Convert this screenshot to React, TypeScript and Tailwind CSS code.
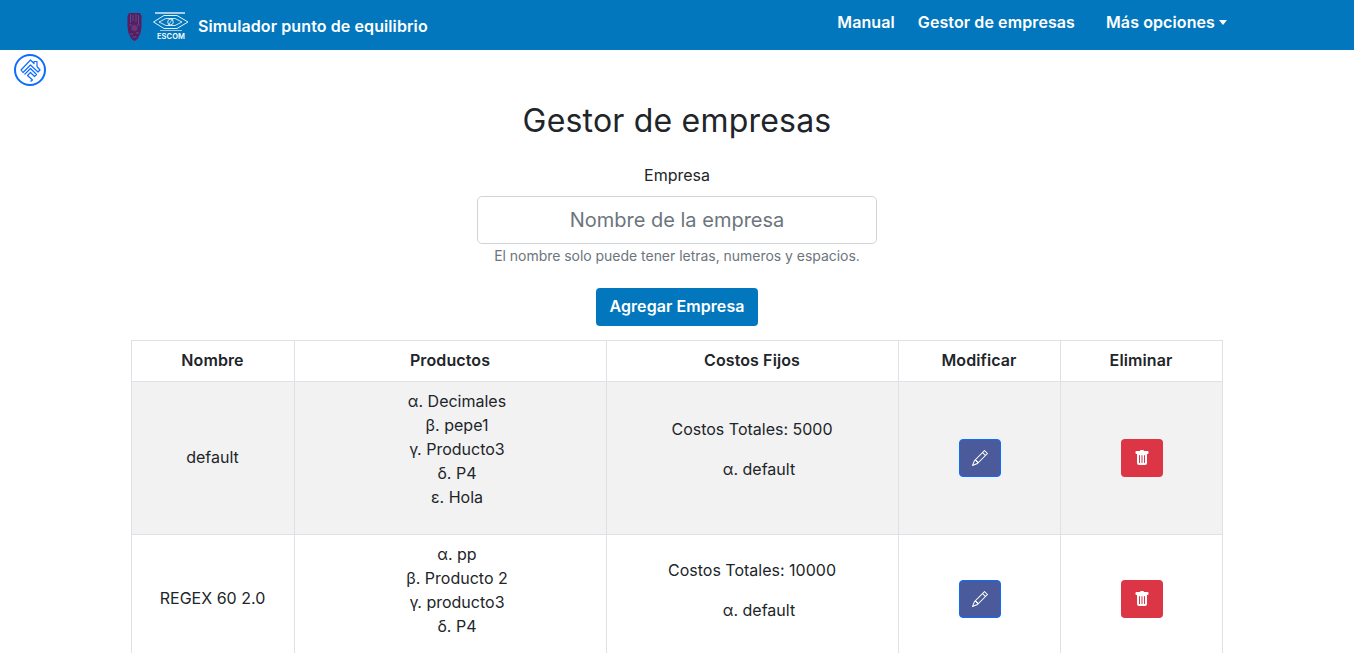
import { BsPencil, BsTrashFill } from "react-icons/bs";

const companies = [
  {
    name: "default",
    products: ["α. Decimales", "β. pepe1", "γ. Producto3", "δ. P4", "ε. Hola"],
    total: 5000,
    costs: ["α. default"],
  },
  {
    name: "REGEX 60 2.0",
    products: ["α. pp", "β. Producto 2", "γ. producto3", "δ. P4"],
    total: 10000,
    costs: ["α. default"],
  },
];

function IpnLogo() {
  return (
    <svg width="15" height="29" viewBox="0 0 15 29" className="mr-[11px] shrink-0">
      <path d="M2 1h11l1.500 3v11l-1 6-3 6-3 2-3-2-3-6-1-6V4z" fill="#5d1a5e" />
      <path d="M3.500 2v9M6 3v6M9 2v8M11.500 3v9M2 13h3M10 13h3" stroke="#3f6fa8" strokeWidth="0.7" />
      <circle cx="7.500" cy="16" r="2.800" fill="#8a2a62" stroke="#2a4c9c" strokeWidth="0.9" />
      <path d="M3 22h3M9 21h3M5.500 25h4" stroke="#3f6fa8" strokeWidth="0.8" />
    </svg>
  );
}

function EscomLogo() {
  return (
    <svg width="36" height="28" viewBox="0 0 36 28" fill="none" stroke="#fff" className="mr-[9px] shrink-0">
      <path d="M2 1h30" strokeWidth="1.300" />
      <path d="M0.500 10L11 3.500h13L35 10l-11 6.500H11z" strokeWidth="0.900" />
      <path d="M6 10l7-3.500h9l7 3.500-7 3.500h-9z" strokeWidth="0.800" />
      <circle cx="17.500" cy="10" r="2.800" strokeWidth="0.800" />
      <path d="M15 13l5-6" strokeWidth="0.700" />
      <path d="M7 18.500h22" strokeWidth="0.600" />
      <text x="18" y="26.500" textAnchor="middle" fontSize="7.500" fontWeight="600" fill="#fff" stroke="none" fontFamily="Inter, sans-serif">
        ESCOM
      </text>
    </svg>
  );
}

function BackBadge() {
  return (
    <svg width="32" height="32" viewBox="0 0 32 32" fill="none" stroke="#0d6efd" className="absolute left-[14px] top-[54px]">
      <circle cx="16" cy="16" r="15" strokeWidth="2" />
      <path d="M7 16L16.500 6l3.500 3.500v-2h3v5l3 3.500-2 2-7.500-7-7.500 7.500z" strokeWidth="1.200" strokeLinejoin="round" />
      <path d="M10.500 20.500l6-6 6 6-2 2-4-4-3 3 5 4.500-2 1.500" strokeWidth="1.200" strokeLinejoin="round" />
    </svg>
  );
}

export default function App() {
  return (
    <div className="relative h-screen overflow-hidden bg-white font-['Inter',sans-serif] text-[16px] leading-6 text-[#212529]">
      <nav className="flex h-[50px] items-center justify-between bg-[#0277bd] pl-[127px] pr-[127px] tracking-[0.1px] text-white">
        <div className="flex items-center pt-[2px]">
          <IpnLogo />
          <EscomLogo />
          <span className="font-semibold">Simulador punto de equilibrio</span>
        </div>
        <div className="-mt-[6px] flex items-center font-semibold">
          <span>Manual</span>
          <span className="ml-[23px]">Gestor de empresas</span>
          <span className="ml-[31px]">Más opciones</span>
          <span className="ml-[4px] mt-[1px] border-x-[4px] border-t-[5px] border-x-transparent border-t-white" />
        </div>
      </nav>

      <BackBadge />

      <main className="flex flex-col items-center">
        <h1 className="mt-[52px] text-[32px] font-normal leading-[38px] tracking-[0.2px]">Gestor de empresas</h1>
        <label className="mt-[23px]">Empresa</label>
        <input
          placeholder="Nombre de la empresa"
          className="mt-[9px] h-[48px] w-[400px] rounded-[5px] border border-[#ced4da] px-4 text-center text-[20px] outline-none placeholder:text-[#6c757d]"
        />
        <small className="mt-[1px] text-[14px] leading-[21px] tracking-[-0.03px] text-[#6c757d]">
          El nombre solo puede tener letras, numeros y espacios.
        </small>
        <button className="mt-[22px] h-[38px] w-[162px] rounded-[4px] bg-[#0277bd] pb-[2px] font-semibold tracking-[0.07px] text-white">
          Agregar Empresa
        </button>

        <table className="mb-auto mr-[1px] mt-[14px] w-[1091px] table-fixed border-collapse text-center">
          <colgroup>
            <col className="w-[163px]" />
            <col className="w-[312px]" />
            <col className="w-[292px]" />
            <col className="w-[162px]" />
            <col className="w-[162px]" />
          </colgroup>
          <thead>
            <tr className="h-[41px]">
              {["Nombre", "Productos", "Costos Fijos", "Modificar", "Eliminar"].map((h) => (
                <th key={h} className="border border-[#dee2e6] pb-[2px] font-semibold tracking-[0.1px]">
                  {h}
                </th>
              ))}
            </tr>
          </thead>
          <tbody>
            {companies.map((c, i) => (
              <tr key={c.name} className={i % 2 === 0 ? "bg-[#f2f2f2]" : "bg-white"}>
                <td className="border border-[#dee2e6] px-2 pb-[9px] pt-[7px]">{c.name}</td>
                <td className="border border-[#dee2e6] px-2 pb-[9px] pt-[7px]">
                  <ul className="mb-4 pl-[14px]">
                    {c.products.map((p) => (
                      <li key={p}>{p}</li>
                    ))}
                  </ul>
                </td>
                <td className="border border-[#dee2e6] px-2 pb-[9px] pt-[7px]">
                  <p className="mb-4">Costos Totales: {c.total}</p>
                  <ul className="mb-4 pl-[14px]">
                    {c.costs.map((p) => (
                      <li key={p}>{p}</li>
                    ))}
                  </ul>
                </td>
                <td className="border border-[#dee2e6] p-2">
                  <button className="ml-[1px] inline-flex h-[38px] w-[42px] items-center justify-center rounded-[4px] border border-[#0d6efd] bg-[#4a5a9a] align-middle text-white">
                    <BsPencil size={16} />
                  </button>
                </td>
                <td className="border border-[#dee2e6] p-2">
                  <button className="ml-[1px] inline-flex h-[38px] w-[42px] items-center justify-center rounded-[4px] bg-[#dc3545] align-middle text-white">
                    <BsTrashFill size={16} />
                  </button>
                </td>
              </tr>
            ))}
          </tbody>
        </table>
      </main>
    </div>
  );
}
